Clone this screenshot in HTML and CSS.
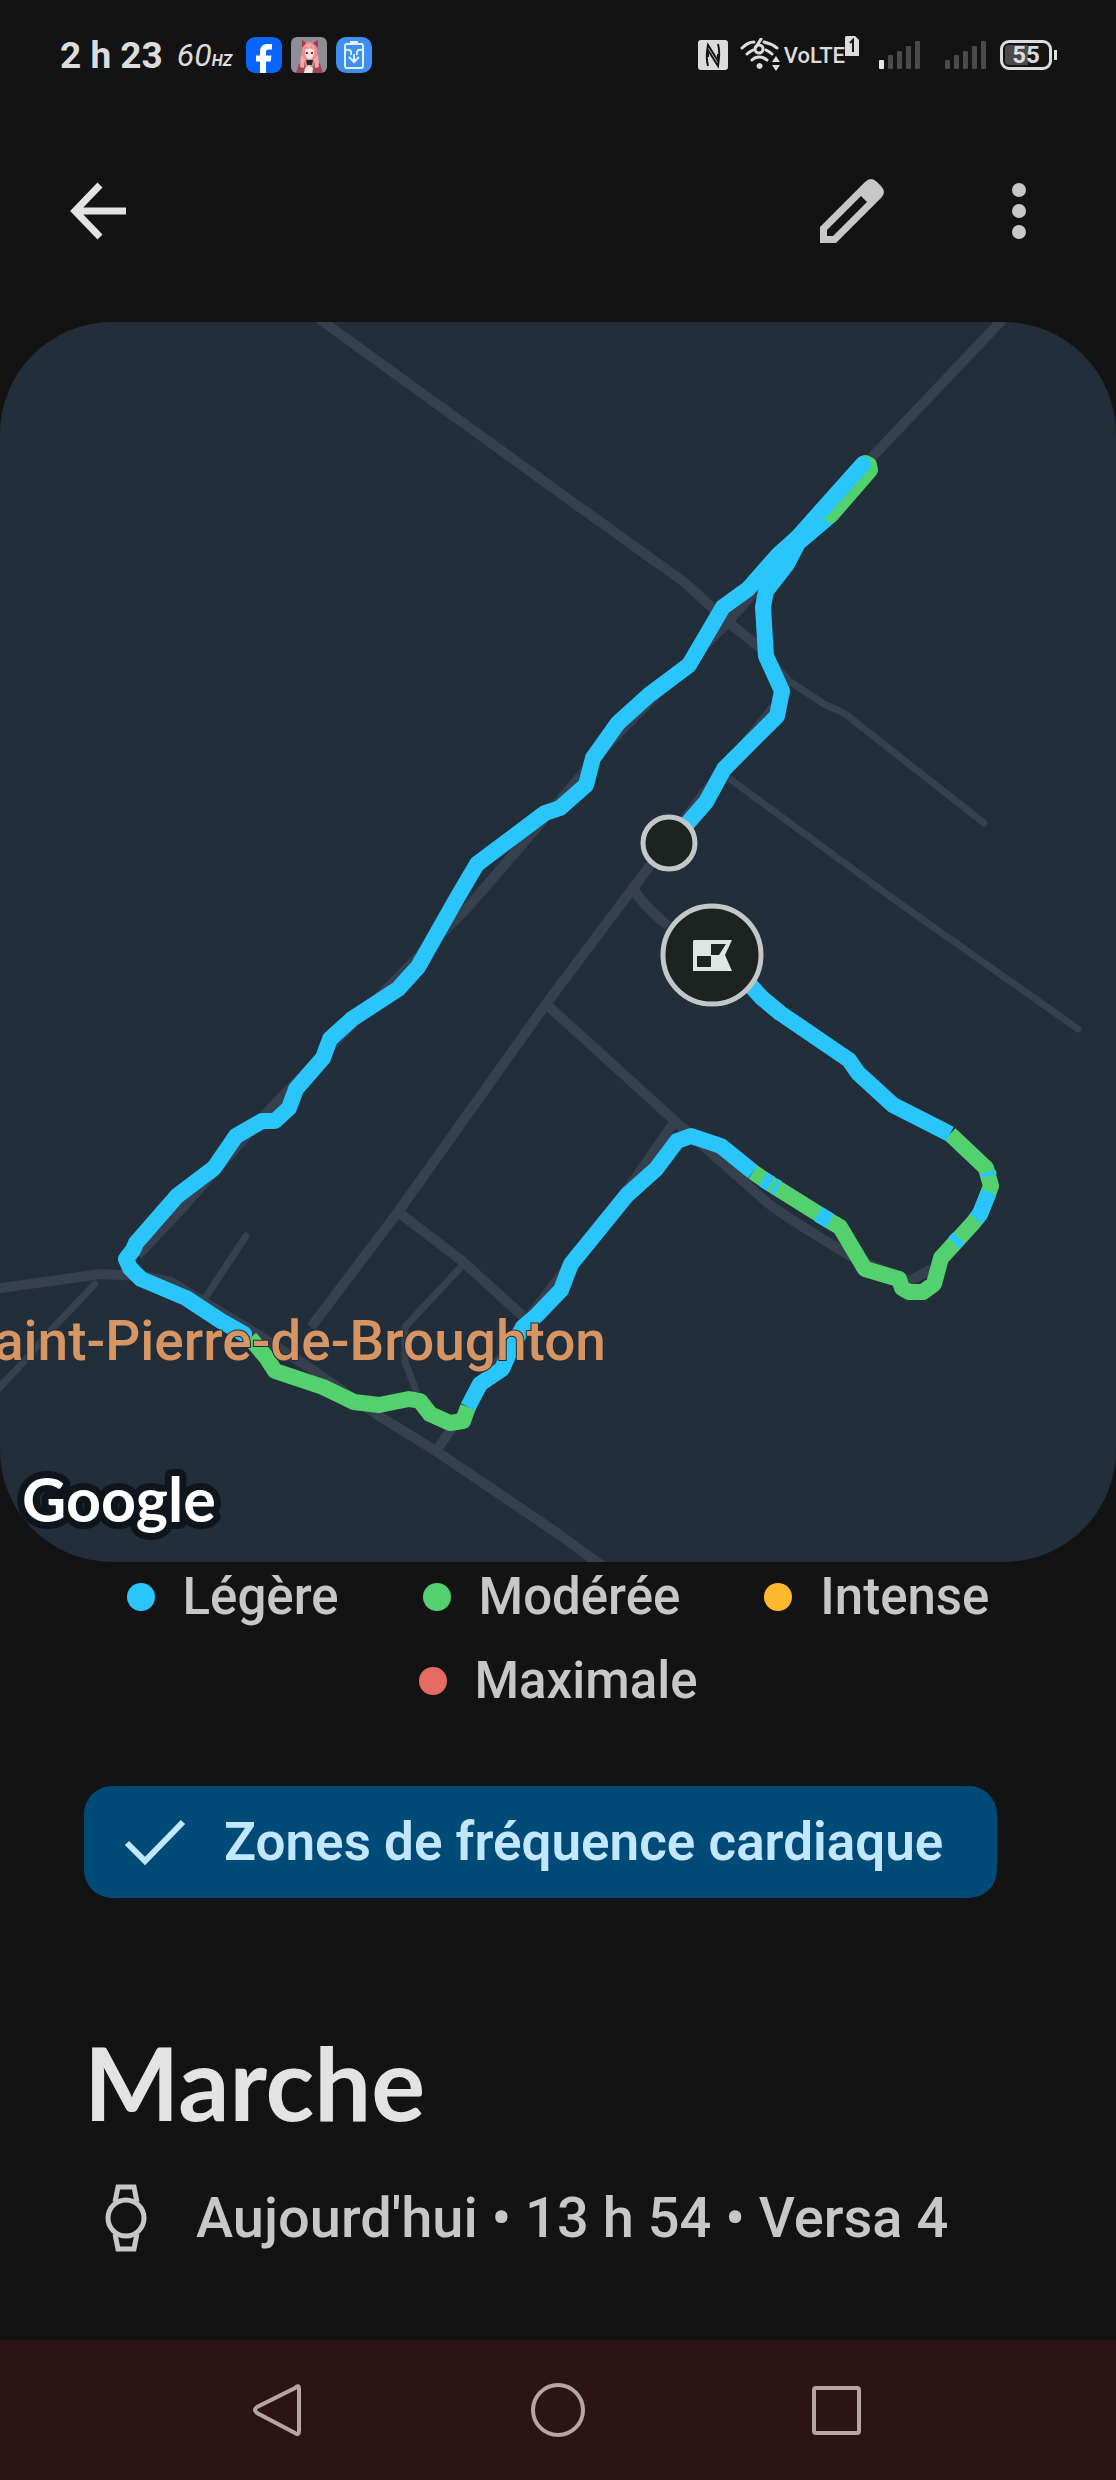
FILE: index.html
```html
<!DOCTYPE html>
<html lang="fr">
<head>
  <meta charset="UTF-8">
  <meta name="viewport" content="width=device-width, initial-scale=1">
  <title>Marche</title>
  <link rel="stylesheet" href="styles.css">
</head>
<body>

<div class="status-bar">
  <div class="status-left">
    <span class="clock">2 h 23</span>
    <span class="refresh">60<small>HZ</small></span>
    <div class="apps">
      <svg class="app" viewBox="0 0 36 36">
        <rect width="36" height="36" rx="9" fill="#0866ff"/>
        <path fill="#fff" d="M14 36V24.500H10V18.500H14V15C14 9.500 17 7 22 7H26V12.500H23C20.700 12.500 20 13.500 20 15.500V18.500H25.500L24.700 24.500H20V36Z"/>
      </svg>
      <svg class="app" viewBox="0 0 36 36">
        <rect width="36" height="36" rx="6" fill="#8d8e98"/>
        <path fill="#e58f92" d="M11 13C11 7 14 5 18 5S26 7 26 13L28 29H9Z"/>
        <path fill="#b0363f" d="M11 3L15 6L11 11ZM27 3L22 6L27 11Z"/>
        <path fill="#fbe3dc" d="M14 13C16 11 21 11 23 13V17C22 20 21 22 18.500 22S15 20 14 17Z"/>
        <path fill="#f3a9a8" d="M12 15L14 8L18 12L20 8L24 15L23 9L18 6L13 9Z"/>
        <path fill="#a3434b" d="M8 27L14 24L15 36H5ZM29 27L23 24L22 36H32Z"/>
        <path fill="#f3a9a8" d="M10 18L14 22L13 31L9 30ZM27 18L23 22L24 31L28 30Z"/>
        <path fill="#27232c" d="M15 23H22L21 28H16Z"/>
        <path fill="#f7e3e0" d="M14 31L18 28L22 31L21 36H13Z"/>
        <path fill="#7b2735" d="M15 15H17V17H15ZM20 15H22V17H20Z"/>
      </svg>
      <svg class="app" viewBox="0 0 36 36">
        <rect width="36" height="36" rx="10" fill="#3f8ef0"/>
        <g fill="none" stroke="#d8f4ff" stroke-width="2">
          <rect x="9" y="7" width="18" height="24" rx="2"/>
          <path d="M14 5.500H22" stroke-width="3"/>
          <path d="M10 13C14 12 16 14 15 18M26 13C22 12 20 14 21 18M13 20L18 25L23 20M18 17V24"/>
        </g>
      </svg>
    </div>
  </div>

  <div class="status-right">
    <svg class="nfc" viewBox="0 0 30 30">
      <rect width="30" height="30" rx="3" fill="#dcdcdc"/>
      <path fill="none" stroke="#151515" stroke-width="2" d="M10 26C8 19 9 10 10 5L20 21V14M20 4C22 11 21 20 20 26L10 10V17"/>
    </svg>
    <svg class="wifi" viewBox="0 0 40 34">
      <g fill="none" stroke="#dcdcdc" stroke-width="3" stroke-linecap="round">
        <path d="M2 10C6 6 10 4 14 4M24 4C29 5 33 7 37 10"/>
        <path d="M7 16C9 14 11 13 13 12M26 12C28 13 30 14 32 16"/>
        <path d="M12 22C16 18 22 18 27 22"/>
        <path d="M21 1L16 9" stroke-width="3"/>
        <circle cx="19" cy="11" r="4" stroke-width="3"/>
      </g>
      <path fill="#dcdcdc" d="M19.500 25a3 3 0 1 0 .1 0ZM36 18L40 24H32ZM32 27H40L36 33Z"/>
    </svg>
    <span class="volte">VoLTE</span>
    <svg class="sim" viewBox="0 0 14 20">
      <path fill="#dcdcdc" d="M1 0H10L14 4V20H0V1Z"/>
      <path fill="none" stroke="#151515" stroke-width="2" d="M5 7L8 4V16"/>
    </svg>
    <svg class="signal" viewBox="0 0 42 28">
      <g fill="#4a4a4a">
        <rect x="9" y="14" width="5" height="14" rx="1"/>
        <rect x="18" y="10" width="5" height="18" rx="1"/>
        <rect x="27" y="5" width="5" height="23" rx="1"/>
        <rect x="36" width="5" height="28" rx="1"/>
      </g>
      <rect y="19" width="5" height="9" rx="1" fill="#e6e6e6"/>
    </svg>
    <svg class="signal" viewBox="0 0 42 28">
      <g fill="#4a4a4a">
        <rect y="19" width="5" height="9" rx="1"/>
        <rect x="9" y="14" width="5" height="14" rx="1"/>
        <rect x="18" y="10" width="5" height="18" rx="1"/>
        <rect x="27" y="5" width="5" height="23" rx="1"/>
        <rect x="36" width="5" height="28" rx="1"/>
      </g>
    </svg>
    <span class="battery">55</span>
  </div>
</div>

<header class="toolbar">
  <button class="icon-button" aria-label="Retour">
    <svg viewBox="0 0 64 64"><path fill="none" stroke="#e3e3e3" stroke-width="7" d="M34 6L9 32L34 58M9 32H60"/></svg>
  </button>
  <div class="toolbar-actions">
    <button class="icon-button" aria-label="Modifier">
      <svg viewBox="0 0 64 64"><path fill="#c7c7c7" fill-rule="evenodd" d="M0 64V48L45 3Q51 -3 57 3L61 7Q67 13 61 19L16 64ZM7 57H13L47 23L41 17L7 51Z"/></svg>
    </button>
    <button class="icon-button" aria-label="Plus d'options">
      <svg viewBox="0 0 64 64" fill="#c7c7c7"><circle cx="31" cy="11" r="7"/><circle cx="31" cy="32" r="7"/><circle cx="31" cy="53" r="7"/></svg>
    </button>
  </div>
</header>

<main>
  <svg class="map" viewBox="0 322 1116 1240" role="img" aria-label="Carte du parcours">
    <!-- roads -->
    <g class="road">
      <path d="M318 318L560 493L684 582L728 622L762 649"/>
      <path d="M1004 318L874 455L728 622L606 746L567 792L539 825L468 907L414 961L271 1108L186 1204L138 1255"/>
      <path d="M-5 1289L100 1274L141 1276L171 1282L257 1334L307 1366L379 1416L436 1451L560 1535L605 1568"/>
      <path d="M788 690L702 796L649 867L633 888L546 1004L398 1212L311 1327"/>
      <path d="M633 888Q642 904 668 926"/>
      <path d="M546 1004L675 1121L769 1204Q790 1220 854 1258L909 1281L932 1269"/>
      <path d="M675 1121L634 1180L530 1316L436 1451"/>
      <path d="M398 1212L461 1260L525 1318"/>
    </g>
    <g class="road road-small">
      <path d="M762 649L789 681L824 704L844 713L984 823"/>
      <path d="M730 779L895 900L1078 1029"/>
      <path d="M459 1269L405 1327V1362L416 1390"/>
      <path d="M246 1236L207 1295"/>
      <path d="M95 1284L54 1327L18 1368L-4 1391"/>
    </g>

    <!-- recorded track, coloured by heart rate zone -->
    <g class="track">
      <path class="light" d="M669 843L686 825L706 802L724 769L777 716L782 691L766 656L763 607L766 591L773 582L787 564L798 543L831 515"/>
      <path class="moderate rounded" d="M831 515L870 470L869 465L865 463"/>
      <path class="light rounded" d="M863 464L797 538L778 555L748 589L723 607L689 665L649 695L618 723L593 758L586 785L560 808L545 813L477 864L457 898L418 967L398 989L352 1019L330 1039L323 1058L296 1089L289 1108L275 1121L262 1121L236 1136L214 1168L177 1196L136 1243L133 1250L126 1259L130 1268L141 1279L186 1298L221 1321L244 1334"/>
      <path class="moderate" d="M250 1338L266 1357L275 1371L323 1387L354 1402L379 1405L409 1399L420 1401L430 1414L450 1423L463 1421L468 1407"/>
      <path class="light" d="M468 1407L480 1384L502 1369L512 1347L523 1327L536 1316L561 1290L571 1264L627 1195L656 1169L677 1141L691 1136L721 1146L753 1172"/>
      <path class="moderate" d="M753 1172L769 1183L833 1223L840 1227L865 1269L899 1279L902 1288L909 1292H923L934 1284L941 1258L973 1223L980 1214L991 1186L986 1168L950 1134"/>
      <path class="light" d="M950 1134L893 1105L858 1073L849 1060L780 1013L762 998L740 974"/>
      <path class="light" d="M763 1179L771 1184M774 1186L778 1188M818 1214L830 1221M954 1243L959 1238M976 1219L980 1214L989 1192M989 1176L988 1172"/>
    </g>

    <text class="town" x="606" y="1360" text-anchor="end">Saint-Pierre-de-Broughton</text>

    <!-- start and finish -->
    <circle class="pin" cx="669" cy="843" r="26"/>
    <circle class="pin" cx="712" cy="955" r="49"/>
    <path fill="#dfe5e2" fill-rule="evenodd" d="M694 940H732L725 955L732 971H693V941ZM711 944V955H719L726 944ZM697 956V967H711V956Z"/>

    <text class="google" x="22" y="1522">Google</text>
  </svg>

  <ul class="legend">
    <li><i class="dot dot-light"></i>Légère</li>
    <li><i class="dot dot-moderate"></i>Modérée</li>
    <li><i class="dot dot-intense"></i>Intense</li>
    <li><i class="dot dot-max"></i>Maximale</li>
  </ul>

  <section class="details">
    <button class="chip" aria-pressed="true">
      <svg viewBox="0 0 62 46"><path fill="none" stroke="#c2e7ff" stroke-width="6" d="M3 24L21 42L59 3"/></svg>
      Zones de fréquence cardiaque
    </button>
    <h1>Marche</h1>
    <p class="source">
      <svg viewBox="0 0 44 68" fill="none" stroke="#c7c7c7" stroke-width="5">
        <circle cx="22" cy="34" r="18"/>
        <path d="M11 18L14 3H30L33 18M11 50L14 65H30L33 50"/>
      </svg>
      Aujourd'hui • 13 h 54 • Versa 4
    </p>
  </section>
</main>

<nav class="nav-bar">
  <button aria-label="Précédent"><svg viewBox="0 0 56 56"><path d="M44 6Q48 2 48 7V49Q48 54 44 51L6 31Q2 28 6 25Z"/></svg></button>
  <button aria-label="Accueil"><svg viewBox="0 0 56 56"><circle cx="28" cy="28" r="25"/></svg></button>
  <button aria-label="Applications récentes"><svg viewBox="0 0 56 56"><rect x="5" y="6" width="45" height="45" rx="2"/></svg></button>
</nav>

</body>
</html>
```

FILE: styles.css
```css
* {
  box-sizing: border-box;
}

body {
  margin: 0;
  min-height: 100vh;
  display: flex;
  flex-direction: column;
  background: #131313;
  color: #c7c7c7;
  font-family: Roboto, "Open Sans", sans-serif;
}

button {
  border: none;
  padding: 0;
  background: none;
  color: inherit;
  font-family: inherit;
  cursor: pointer;
}

svg {
  display: block;
}

/* status bar */
.status-bar {
  display: flex;
  justify-content: space-between;
  align-items: center;
  height: 110px;
  padding: 0 64px 0 60px;
  color: #dcdcdc;
}

.status-left,
.status-right,
.apps {
  display: flex;
  align-items: center;
}

.status-left {
  gap: 14px;
}

.clock {
  font-size: 37px;
  font-weight: 700;
}

.refresh {
  font-size: 32px;
  font-style: italic;
}

.refresh small {
  font-size: 16px;
  font-weight: 700;
}

.apps {
  gap: 9px;
}

.app {
  width: 36px;
  height: 36px;
}

.nfc {
  width: 30px;
  height: 30px;
  margin-right: 12px;
}

.wifi {
  width: 40px;
  height: 34px;
  margin-right: 4px;
}

.volte {
  font-size: 22px;
  font-weight: 500;
}

.sim {
  width: 14px;
  height: 20px;
  margin-bottom: 18px;
  margin-right: 20px;
}

.signal {
  width: 42px;
  height: 28px;
  margin-right: 24px;
}

.signal:nth-last-child(2) {
  margin-right: 13px;
}

.battery {
  position: relative;
  width: 52px;
  height: 30px;
  border: 3px solid #dcdcdc;
  border-radius: 9px;
  background: linear-gradient(90deg, #4a4a4a 55%, transparent 55%) content-box;
  padding: 2px;
  font-size: 24px;
  font-weight: 700;
  line-height: 20px;
  text-align: center;
}

.battery::after {
  content: "";
  position: absolute;
  right: -8px;
  top: 7px;
  width: 3px;
  height: 10px;
  background: #dcdcdc;
}

/* toolbar */
.toolbar {
  display: flex;
  justify-content: space-between;
  align-items: center;
  height: 212px;
  padding: 0 64px 10px 66px;
}

.toolbar-actions {
  display: flex;
  gap: 104px;
}

.icon-button svg {
  width: 64px;
  height: 64px;
}

/* map */
.map {
  width: 100%;
  border-radius: 112px;
  background: #232e3b;
}

.road {
  fill: none;
  stroke: #36404e;
  stroke-width: 10;
  stroke-linejoin: round;
}

.road-small {
  stroke-width: 7;
  stroke-linecap: round;
}

.track {
  fill: none;
  stroke-width: 16;
  stroke-linejoin: round;
}

.rounded {
  stroke-linecap: round;
}

.light {
  stroke: #29c5fb;
}

.moderate {
  stroke: #53d16f;
}

.town {
  font: 500 55px Roboto, sans-serif;
  fill: #d69563;
  stroke: #232e3b;
  stroke-width: 2;
  paint-order: stroke;
}

.google {
  font: 700 61px Lato, sans-serif;
  fill: #fff;
  stroke: #0e151d;
  stroke-width: 14;
  stroke-linejoin: round;
  paint-order: stroke;
}

.pin {
  fill: #1b2421;
  stroke: #c4c7c8;
  stroke-width: 5;
}

/* zones legend */
.legend {
  display: flex;
  flex-wrap: wrap;
  justify-content: center;
  gap: 28px 84px;
  margin: 0;
  padding: 7px 100px 0;
  list-style: none;
  font-size: 51px;
  font-weight: 500;
  line-height: 56px;
}

.legend li {
  display: flex;
  align-items: center;
  gap: 28px;
}

.dot {
  width: 28px;
  height: 28px;
  border-radius: 50%;
}

.dot-light {
  background: #29c5fb;
}

.dot-moderate {
  background: #53d16f;
}

.dot-intense {
  background: #ffb92e;
}

.dot-max {
  background: #e66a64;
}

/* activity */
.details {
  padding: 77px 84px 0;
}

.chip {
  display: flex;
  align-items: center;
  gap: 38px;
  height: 112px;
  padding: 0 54px 0 40px;
  border-radius: 28px;
  background: #004a77;
  color: #c2e7ff;
  font-size: 53px;
  font-weight: 600;
}

.chip svg {
  width: 62px;
  height: 46px;
}

h1 {
  margin: 122px 0 0;
  color: #e3e3e3;
  font-family: Lato, "Open Sans", sans-serif;
  font-size: 101px;
  font-weight: 700;
  line-height: 124px;
}

.source {
  display: flex;
  align-items: center;
  gap: 48px;
  margin: 38px 0 0;
  padding-left: 20px;
  font-size: 56px;
  font-weight: 500;
  line-height: 72px;
}

.source svg {
  width: 44px;
  height: 68px;
}

/* system navigation */
.nav-bar {
  display: grid;
  grid-template-columns: repeat(3, 1fr);
  margin-top: auto;
  height: 140px;
  padding: 0 140px;
  background: #2c1314;
}

.nav-bar svg {
  width: 56px;
  height: 56px;
  margin: auto;
  fill: none;
  stroke: #b5a5a5;
  stroke-width: 4;
}
```
